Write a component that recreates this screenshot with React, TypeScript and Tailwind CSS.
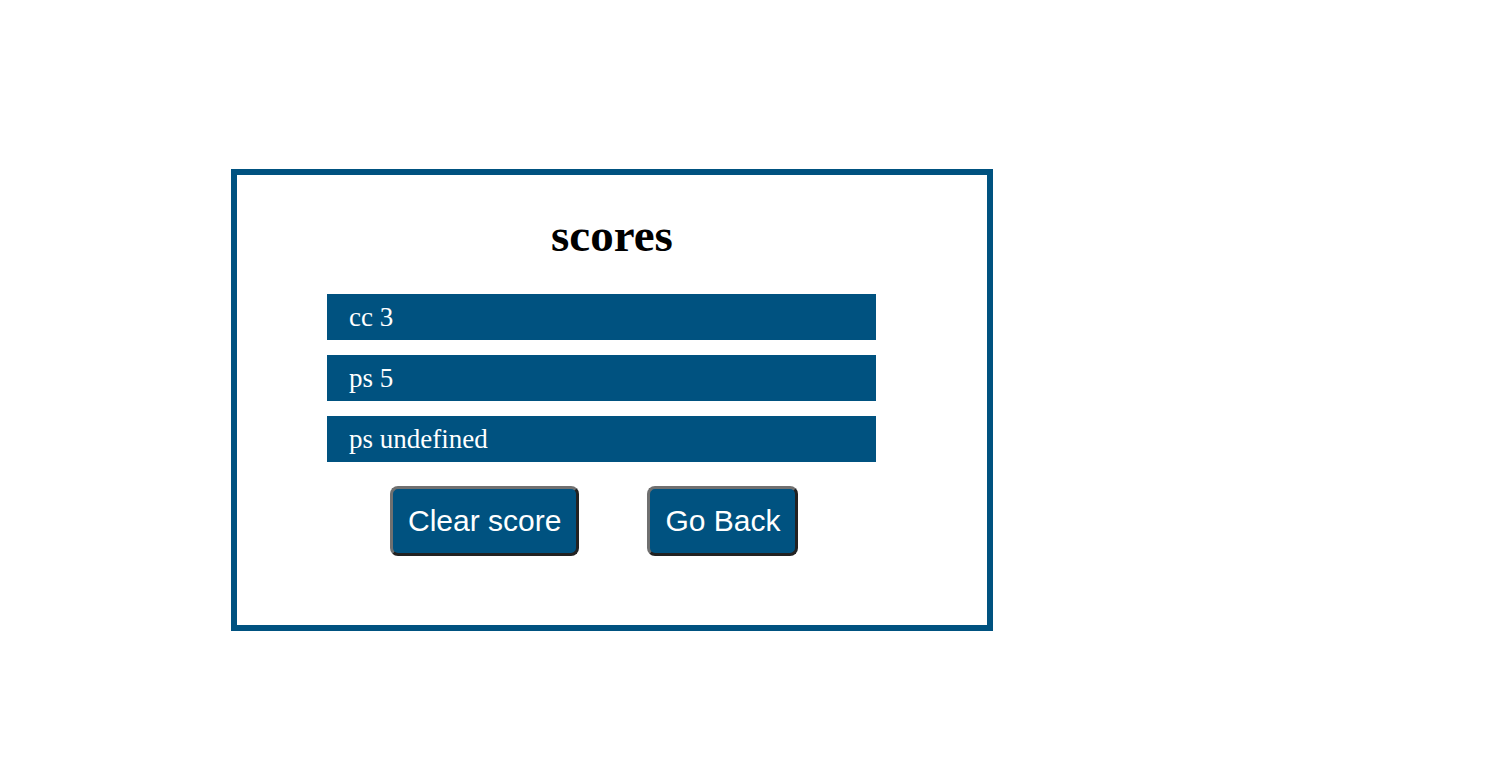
export default function App() {
  const scores = ["cc 3", "ps 5", "ps undefined"];

  return (
    <div className="min-h-screen bg-white pt-[169px] pl-[231px]">
      <div className="w-[762px] h-[462px] border-[6px] border-[#005280] flex flex-col">
        <h1
          className="mt-[34px] text-center text-[47px] leading-[52px] font-bold text-black"
          style={{ fontFamily: '"Liberation Serif", "Times New Roman", serif' }}
        >
          scores
        </h1>
        <ul className="mt-[33px] ml-[90px] w-[549px] flex flex-col gap-[15px]">
          {scores.map((s, i) => (
            <li
              key={i}
              className="h-[46px] bg-[#005280] text-white text-[27px] leading-[42px] pl-[22px] pt-[2px] pb-[2px]"
              style={{ fontFamily: '"Liberation Serif", "Times New Roman", serif' }}
            >
              {s}
            </li>
          ))}
        </ul>
        <div
          className="mt-[24px] ml-[153px] flex gap-[68px]"
          style={{ fontFamily: '"Liberation Sans", Arial, sans-serif' }}
        >
          <button className="bg-[#005280] text-white text-[30px] leading-[34px] px-[15px] pt-[15px] pb-[15px] rounded-[8px] border-[3px] border-t-[#707070] border-l-[#707070] border-b-[#222222] border-r-[#222222]">
            Clear score
          </button>
          <button className="bg-[#005280] text-white text-[30px] leading-[34px] px-[15px] pt-[15px] pb-[15px] rounded-[8px] border-[3px] border-t-[#707070] border-l-[#707070] border-b-[#222222] border-r-[#222222]">
            Go Back
          </button>
        </div>
      </div>
    </div>
  );
}
